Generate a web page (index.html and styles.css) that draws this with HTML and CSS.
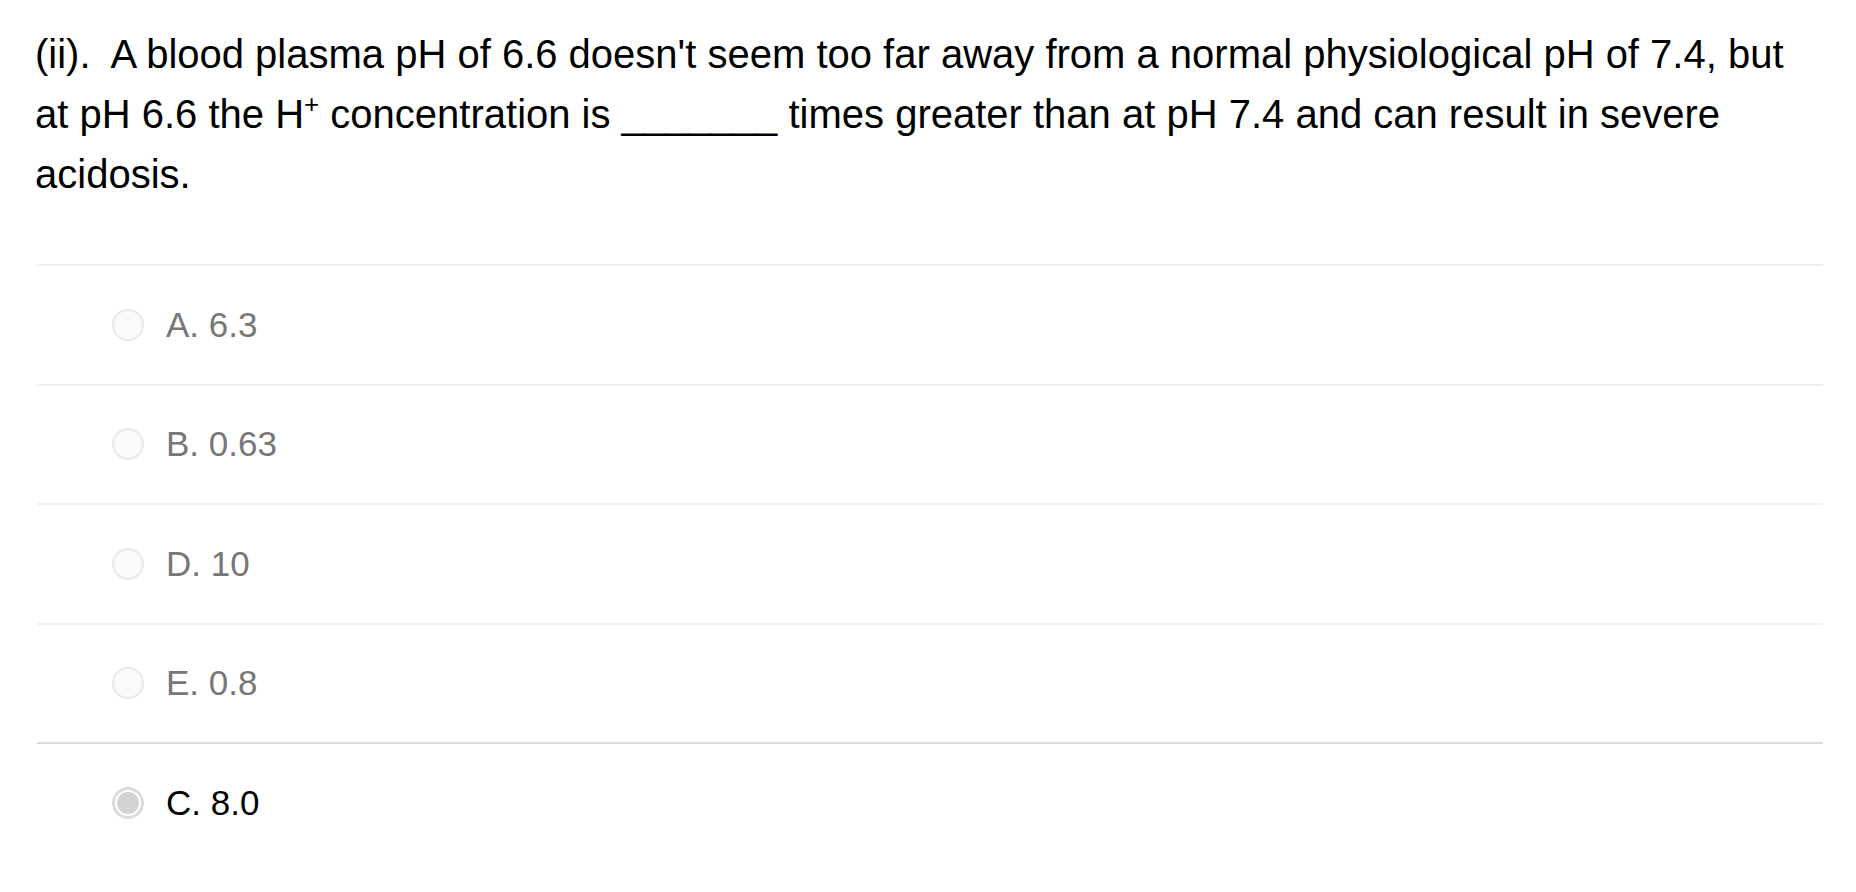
FILE: index.html
```html
<!DOCTYPE html>
<html>
<head>
<meta charset="utf-8">
<link rel="stylesheet" href="styles.css">
</head>
<body>
<div class="page">
  <p class="question">(ii).&nbsp; A blood plasma pH of 6.6 doesn't seem too far away from a normal physiological pH of 7.4, but at pH 6.6 the H<sup class="sup">+</sup> concentration is _______ times greater than at pH 7.4 and can result in severe acidosis.</p>
  <ul class="options">
    <li class="option"><span class="radio"></span><span class="label">A. 6.3</span></li>
    <li class="option"><span class="radio"></span><span class="label">B. 0.63</span></li>
    <li class="option"><span class="radio"></span><span class="label">D. 10</span></li>
    <li class="option"><span class="radio"></span><span class="label">E. 0.8</span></li>
    <li class="option selected"><span class="radio"></span><span class="label">C. 8.0</span></li>
  </ul>
</div>
</body>
</html>
```

FILE: styles.css
```css
html, body {
  margin: 0;
  padding: 0;
  background: #ffffff;
}
.page {
  padding: 24px 33px 0 35px;
  font-family: "Liberation Sans", Arial, sans-serif;
}
.question {
  margin: 0;
  font-size: 40px;
  line-height: 60px;
  color: #000;
}
.sup {
  font-size: 26px;
  line-height: 0;
  vertical-align: 15px;
}
.options {
  list-style: none;
  margin: 60px 0 0 2px;
  padding: 0;
}
.option {
  display: flex;
  align-items: center;
  height: 117.5px;
  border-top: 2px solid #efefef;
  padding-left: 75px;
}
.option.selected {
  border-top-color: #dcdcdc;
}
.radio {
  width: 28px;
  height: 28px;
  border: 2px solid #e8e8e8;
  border-radius: 50%;
  background: #fafafa;
  box-sizing: content-box;
  flex: none;
  display: flex;
  align-items: center;
  justify-content: center;
}
.selected .radio {
  width: 26px;
  height: 26px;
  border: 3px solid #dcdcdc;
  background: #ffffff;
}
.selected .radio::after {
  content: "";
  width: 22px;
  height: 22px;
  border-radius: 50%;
  background: #d3d3d3;
}
.label {
  margin-left: 22px;
  font-size: 35px;
  color: #777;
}
.selected .label {
  color: #000;
}
```
